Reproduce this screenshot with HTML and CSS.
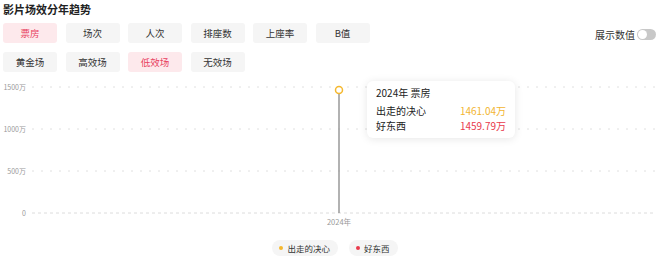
FILE: index.html
```html
<!DOCTYPE html>
<html lang="zh-CN">
<head>
  <meta charset="UTF-8" />
  <title>影片场效分年趋势</title>
  <link rel="stylesheet" href="styles.css">
</head>
<body>
  <div class="panel">
    <div class="title">影片场效分年趋势</div>

    <div class="filters">
      <div class="tabs">
        <button class="tab active">票房</button>
        <button class="tab">场次</button>
        <button class="tab">人次</button>
        <button class="tab">排座数</button>
        <button class="tab">上座率</button>
        <button class="tab">B值</button>
        <button class="tab">黄金场</button>
        <button class="tab">高效场</button>
        <button class="tab active">低效场</button>
        <button class="tab">无效场</button>
      </div>
      <div class="show-values">
        <span>展示数值</span>
        <span class="switch"><span class="knob"></span></span>
      </div>
    </div>

    <div class="chart">
      <svg class="plot" width="660" height="152" viewBox="0 78 660 152">
        <g class="axis-labels">
          <text x="26" y="89.5">1500万</text>
          <text x="26" y="131.5">1000万</text>
          <text x="26" y="173.5">500万</text>
          <text x="26" y="215.5">0</text>
        </g>
        <g class="grid">
          <line x1="32" y1="87" x2="655" y2="87" />
          <line x1="32" y1="129" x2="655" y2="129" />
          <line x1="32" y1="171" x2="655" y2="171" />
        </g>
        <line class="baseline" x1="32" y1="213" x2="655" y2="213" />
        <line class="pointer" x1="339" y1="94" x2="339" y2="213" />
        <circle class="dot" cx="339" cy="90" r="3.5" />
        <text class="x-label" x="339" y="225">2024年</text>
      </svg>

      <div class="tooltip">
        <div class="tip-title">2024年 票房</div>
        <div class="tip-row">
          <span>出走的决心</span>
          <span class="val-yellow">1461.04万</span>
        </div>
        <div class="tip-row">
          <span>好东西</span>
          <span class="val-red">1459.79万</span>
        </div>
      </div>
    </div>

    <div class="legend">
      <span class="legend-item"><i class="mark yellow"></i>出走的决心</span>
      <span class="legend-item"><i class="mark red"></i>好东西</span>
    </div>
  </div>
</body>
</html>
```

FILE: styles.css
```css
html, body {
  margin: 0;
  padding: 0;
  background: #fff;
  font-family: "Noto Sans CJK SC", "Noto Sans", sans-serif;
  color: #222;
  height: 260px;
  overflow: hidden;
}

.panel {
  width: 660px;
}

.title {
  font-size: 11px;
  font-weight: bold;
  line-height: 16px;
  padding: 1px 0 0 3px;
  color: #222;
}

.filters {
  display: flex;
  justify-content: space-between;
  align-items: flex-start;
  margin-top: 6px;
}

.tabs {
  display: grid;
  grid-template-columns: repeat(6, 54px);
  column-gap: 8.5px;
  row-gap: 9px;
  padding-left: 3px;
}

.tab {
  height: 20px;
  border: none;
  border-radius: 3px;
  background: #f5f5f5;
  color: #333;
  font-family: inherit;
  font-size: 9.5px;
  padding: 0;
  cursor: pointer;
}

.tab.active {
  background: #fde9ec;
  color: #e8405e;
}

.show-values {
  display: flex;
  align-items: center;
  gap: 2px;
  margin-top: 4px;
  padding-right: 4px;
  font-size: 10px;
  color: #333;
}

.switch {
  position: relative;
  display: inline-block;
  width: 19px;
  height: 11px;
  border-radius: 6px;
  background: #c8c8c8;
}

.switch .knob {
  position: absolute;
  top: 1px;
  left: 1px;
  width: 9px;
  height: 9px;
  border-radius: 50%;
  background: #fff;
}

.chart {
  position: relative;
  margin-top: 6px;
  height: 152px;
}

.plot {
  display: block;
}

.axis-labels text {
  font-size: 7px;
  fill: #999;
  text-anchor: end;
}

.grid line {
  stroke: #e0e0e0;
  stroke-width: 1;
  stroke-dasharray: 2 7;
}

.baseline {
  stroke: #dcdcdc;
  stroke-width: 1;
  stroke-dasharray: 3 3;
}

.pointer {
  stroke: #999;
  stroke-width: 1.5;
}

.dot {
  fill: #fff;
  stroke: #f5b82e;
  stroke-width: 1.5;
}

.x-label {
  font-size: 7.5px;
  fill: #999;
  text-anchor: middle;
}

.tooltip {
  position: absolute;
  left: 367px;
  top: 3px;
  width: 130px;
  padding: 5px 9px;
  background: #fff;
  border-radius: 6px;
  box-shadow: 0 1px 8px rgba(0, 0, 0, 0.1);
  font-size: 10px;
  color: #222;
}

.tip-title {
  line-height: 14px;
  margin-bottom: 3px;
}

.tip-row {
  display: flex;
  justify-content: space-between;
  line-height: 15px;
}

.val-yellow {
  color: #f2b530;
}

.val-red {
  color: #e93a4c;
}

.legend {
  display: flex;
  justify-content: center;
  gap: 11px;
  padding-left: 10px;
  margin-top: 10px;
}

.legend-item {
  display: inline-flex;
  align-items: center;
  gap: 4px;
  height: 16px;
  padding: 0 8px 0 7px;
  border-radius: 8px;
  background: #f5f5f5;
  font-size: 8.5px;
  color: #333;
}

.mark {
  display: inline-block;
  width: 4px;
  height: 4px;
  border-radius: 50%;
}

.mark.yellow {
  background: #f5b82e;
}

.mark.red {
  background: #e93a4c;
}
```
